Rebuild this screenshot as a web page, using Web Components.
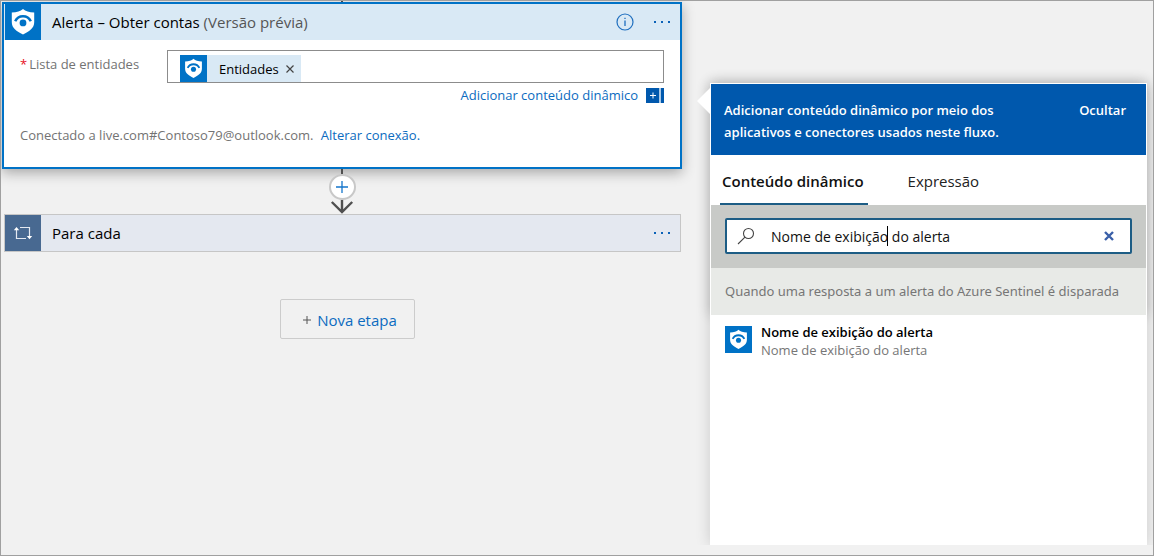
<!DOCTYPE html>
<html lang="pt-BR">
<head>
<meta charset="utf-8">
<title>Designer de fluxo</title>
<style>
html{height:100%}
body{margin:0;min-height:100%;background:#f1f1f1;font-family:"Open Sans","Noto Sans",sans-serif;font-size:13px;color:#000}
*{box-sizing:border-box}
body{display:flex}
flow-designer{flex:1}
</style>
</head>
<body>
<flow-designer>
  <flow-canvas slot="canvas">
    <action-card>
      <span slot="title">Alerta – Obter contas</span>
      <span slot="tag">(Versão prévia)</span>
      <token-chip slot="value">Entidades</token-chip>
    </action-card>
    <flow-connector></flow-connector>
    <loop-card>Para cada</loop-card>
    <new-step>Nova etapa</new-step>
  </flow-canvas>
  <content-panel slot="panel">
    <panel-header slot="top">Adicionar conteúdo dinâmico por meio dos aplicativos e conectores usados neste fluxo.</panel-header>
    <panel-tabs slot="top"></panel-tabs>
    <search-box slot="top"></search-box>
    <group-title slot="top">Quando uma resposta a um alerta do Azure Sentinel é disparada</group-title>
    <content-item>
      <span slot="name">Nome de exibição do alerta</span>
      <span slot="detail">Nome de exibição do alerta</span>
    </content-item>
  </content-panel>
</flow-designer>

<script>
const base = `*{box-sizing:border-box}
button{font:inherit;color:inherit;background:none;border:0;padding:0;margin:0;cursor:pointer}
a{color:#0b6bc0;text-decoration:none}svg{display:block}`;

function define(name, css, html) {
  customElements.define(name, class extends HTMLElement {
    constructor() {
      super();
      this.attachShadow({ mode: "open" }).innerHTML = `<style>${base}${css}</style>${html}`;
    }
  });
}

const dots = `<svg width="20" height="6" viewBox="0 0 20 6" fill="#0b62b8"><rect x="2" y="2" width="2" height="2"/><rect x="9" y="2" width="2" height="2"/><rect x="16" y="2" width="2" height="2"/></svg>`;

define("shield-icon", `
:host{display:block;flex:none;width:36px;height:36px;background:#0072c6}
svg{width:100%;height:100%}`,
`<svg viewBox="0 0 36 36" aria-hidden="true">
<path fill="#fff" d="M18 5c2.600 2.300 6 3.500 11.200 3.500v9.800c0 5.800-4.600 8.900-11.200 12.200C11.400 27.200 6.800 24.100 6.800 18.300V8.500C12 8.500 15.400 7.300 18 5z"/>
<path fill="none" stroke="#0072c6" stroke-width="2.500" d="M10.200 17.300A8.600 8.600 0 0 1 25.800 17.300"/>
<circle cx="18" cy="18.900" r="3.400" fill="#0072c6"/></svg>`);

define("flow-designer", `
:host{display:grid;grid-template-columns:minmax(0,680fr) minmax(0,437fr);column-gap:28px;border:1px solid #a0a0a0;padding:0 6px 10px 1px;overflow:hidden}
::slotted([slot=panel]){margin-top:82px}`,
`<slot name="canvas"></slot><slot name="panel"></slot>`);

define("flow-canvas", `
:host{display:flex;flex-direction:column;align-items:stretch}
.stub{width:2px;height:1px;background:#505050;align-self:center}`,
`<div class="stub"></div><slot></slot>`);

define("action-card", `
:host{display:block;background:#fff;border:2px solid #0072c6;box-shadow:0 4px 12px rgba(0,0,0,.3)}
header{display:flex;align-items:center;height:36px;padding-left:1px;background:#d9e9f5;font-size:15px}
h2{flex:1;margin:0 0 0 11px;font-size:15px;font-weight:400;white-space:nowrap}
.tag{color:#555}
.info{margin-right:18px}
.more{margin-right:8px}
.body{padding:10px 16px 22px}
.field{display:grid;grid-template-columns:147px minmax(0,1fr)}
label{padding-top:4px;line-height:20px;color:#737373}
label b{font-weight:400;color:#e81123;margin-right:2px}
.box{display:flex;align-items:flex-end;height:33px;border:1px solid #8c8c8c;padding-left:12px}
.box input{flex:1;min-width:0;border:0;outline:0;background:none;font:inherit}
.add{display:flex;justify-content:flex-end;align-items:center;height:24px;gap:8px}
.conn{margin-top:18px;line-height:20px;color:#737373}
.conn a{margin-left:4px}`,
`<header><shield-icon></shield-icon>
<h2><slot name="title"></slot> <span class="tag"><slot name="tag"></slot></span></h2>
<button class="info" aria-label="Informações"><svg width="18" height="18" viewBox="0 0 18 18"><circle cx="9" cy="9" r="8" fill="none" stroke="#1f6fbf" stroke-width="1.200"/><path d="M9 7.500v5.500M9 4.700v1.400" stroke="#1f6fbf" stroke-width="1.300"/></svg></button>
<button class="more" aria-label="Mais">${dots}</button></header>
<div class="body">
<div class="field"><label for="entities"><b>*</b>Lista de entidades</label>
<div class="box"><slot name="value"></slot><input id="entities"></div></div>
<div class="add"><a href="#">Adicionar conteúdo dinâmico</a><svg width="18" height="15" viewBox="0 0 18 15"><path fill="#0058ad" d="M0 0h18v15H0z"/><path fill="#a9c8e6" d="M13 0h2v15h-2z"/><path stroke="#fff" d="M4 7.500h6M7 4.500v6"/></svg></div>
<div class="conn">Conectado a live.com#Contoso79@outlook.com. <a href="#">Alterar conexão.</a></div>
</div>`);

define("token-chip", `
:host{display:flex;align-items:center;height:27px;background:#d9e9f5;padding-right:6px}
shield-icon{width:27px;height:27px}
span{margin-left:12px}
button{margin-left:6px}`,
`<shield-icon></shield-icon><span><slot></slot></span><button aria-label="Remover"><svg width="10" height="10" viewBox="0 0 10 10"><path d="M1.500 1.500l7 7M8.500 1.500l-7 7" stroke="#444" stroke-width="1.200"/></svg></button>`);

define("flow-connector", `
:host{display:flex;flex-direction:column;align-items:center}
.stem{width:2px;height:5px;background:#505050}
button{width:27px;height:26px;border:2px solid #c8c8c8;border-radius:50%;background:#fff;display:grid;place-items:center}`,
`<div class="stem"></div><button aria-label="Inserir etapa"><svg width="14" height="14" viewBox="0 0 14 14"><path d="M7 1v12M1 7h12" stroke="#1576cb" stroke-width="1.300"/></svg></button>
<svg width="24" height="14" viewBox="0 0 24 14"><path d="M12 0v12M1.800 2L12 12 22.200 2" fill="none" stroke="#505050" stroke-width="2.400"/></svg>`);

define("loop-card", `
:host{display:flex;align-items:center;height:38px;margin:0 1px 0 2px;background:#e4e8f0;border:1px solid #c6c6c6;font-size:15px}
.icon{width:36px;height:36px;background:#486991;display:grid;place-items:center}
h2{flex:1;margin:0 0 0 11px;font-size:15px;font-weight:400}
.more{margin-right:8px}`,
`<div class="icon"><svg width="20" height="16" viewBox="0 0 20 16"><path d="M3.500 4v9.500H13M7 2.500h9.500V12" fill="none" stroke="#e4e9f1" stroke-width="1.200"/><path d="M.8 5.200L3.500 2l2.700 3.200zM13.800 11l2.700 3.200L19.200 11z" fill="#fff"/></svg></div>
<h2><slot></slot></h2><button class="more" aria-label="Mais">${dots}</button>`);

define("new-step", `
:host{display:flex;justify-content:center;padding:47px 0 0 10px}
button{width:135px;height:40px;border:1px solid #ccc;border-radius:2px;font-size:15px;color:#0b6bc0;display:flex;align-items:center;justify-content:center;gap:6px;padding:2px 0 0 6px}`,
`<button><svg width="8" height="8" viewBox="0 0 8 8"><path d="M4 0v8M0 4h8" stroke="#555"/></svg><slot></slot></button>`);

define("content-panel", `
:host{display:block;position:relative;background:#fff;box-shadow:0 0 14px rgba(0,0,0,.16);clip-path:inset(-14px -14px 0 -20px)}
.top{padding:1px 1px 0;box-shadow:0 0 12px rgba(0,0,0,.2)}
.arrow{position:absolute;left:-13px;top:4px}
.list{position:relative;background:#fff}`,
`<div class="top"><slot name="top"></slot></div>
<svg class="arrow" width="14" height="28" viewBox="0 0 14 28"><path fill="#fff" d="M14 0v28L0 14z"/></svg><div class="list"><slot></slot></div>`);

define("panel-header", `
:host{display:flex;justify-content:space-between;align-items:flex-start;height:71px;padding:15px 20px 0 13px;background:#0058ad;color:#fff;font-weight:600;line-height:22px}
p{margin:0;max-width:300px}`,
`<p><slot></slot></p><button>Ocultar</button>`);

define("panel-tabs", `
:host{display:flex;height:50px;padding-left:9px;gap:38px;font-size:15px;color:#222}
button{height:50px;padding:4px 2px 0;border-bottom:2px solid transparent}
.on{font-weight:600;border-color:#1d5d85;color:#111;padding-right:4px}`,
`<button class="on" role="tab" aria-selected="true">Conteúdo dinâmico</button><button role="tab">Expressão</button>`);

define("search-box", `
:host{display:block;background:#c8cac7;padding:13px 14px 14px}
.box{position:relative;display:flex;align-items:center;height:36px;background:#fff;border:2px solid #1d5d85;border-radius:2px;padding:0 16px 0 10px}
input{flex:1;min-width:0;margin-left:16px;padding:0;border:0;outline:0;background:none;font:inherit;font-size:14px;color:#111}
.caret{position:absolute;left:160px;top:6px;width:1px;height:20px;background:#000}`,
`<div class="box"><svg width="18" height="18" viewBox="0 0 18 18" fill="none" stroke="#444" stroke-width="1.100"><circle cx="11.500" cy="6.500" r="5"/><path d="M8 10.200L1 17"/></svg>
<input aria-label="Pesquisar conteúdo dinâmico" value="Nome de exibição do alerta"><i class="caret"></i>
<button aria-label="Limpar"><svg width="10" height="10" viewBox="0 0 10 10"><path d="M1 1l8 8M9 1l-8 8" stroke="#3a5fa8" stroke-width="2.400"/></svg></button></div>`);

define("group-title", `
:host{display:block;height:47px;line-height:47px;padding-left:14px;background:#e8eae7;color:#767676;font-family:"Noto Sans","Open Sans",sans-serif;white-space:nowrap}`,
`<slot></slot>`);

define("content-item", `
:host{display:flex;gap:9px;padding:8px 15px}
shield-icon{width:27px;height:27px;margin-top:3px}
.name,.detail{display:block;line-height:18px}
.name{font-weight:600}.detail{color:#767676}`,
`<shield-icon></shield-icon><div><span class="name"><slot name="name"></slot></span><span class="detail"><slot name="detail"></slot></span></div>`);
</script>
</body>
</html>
